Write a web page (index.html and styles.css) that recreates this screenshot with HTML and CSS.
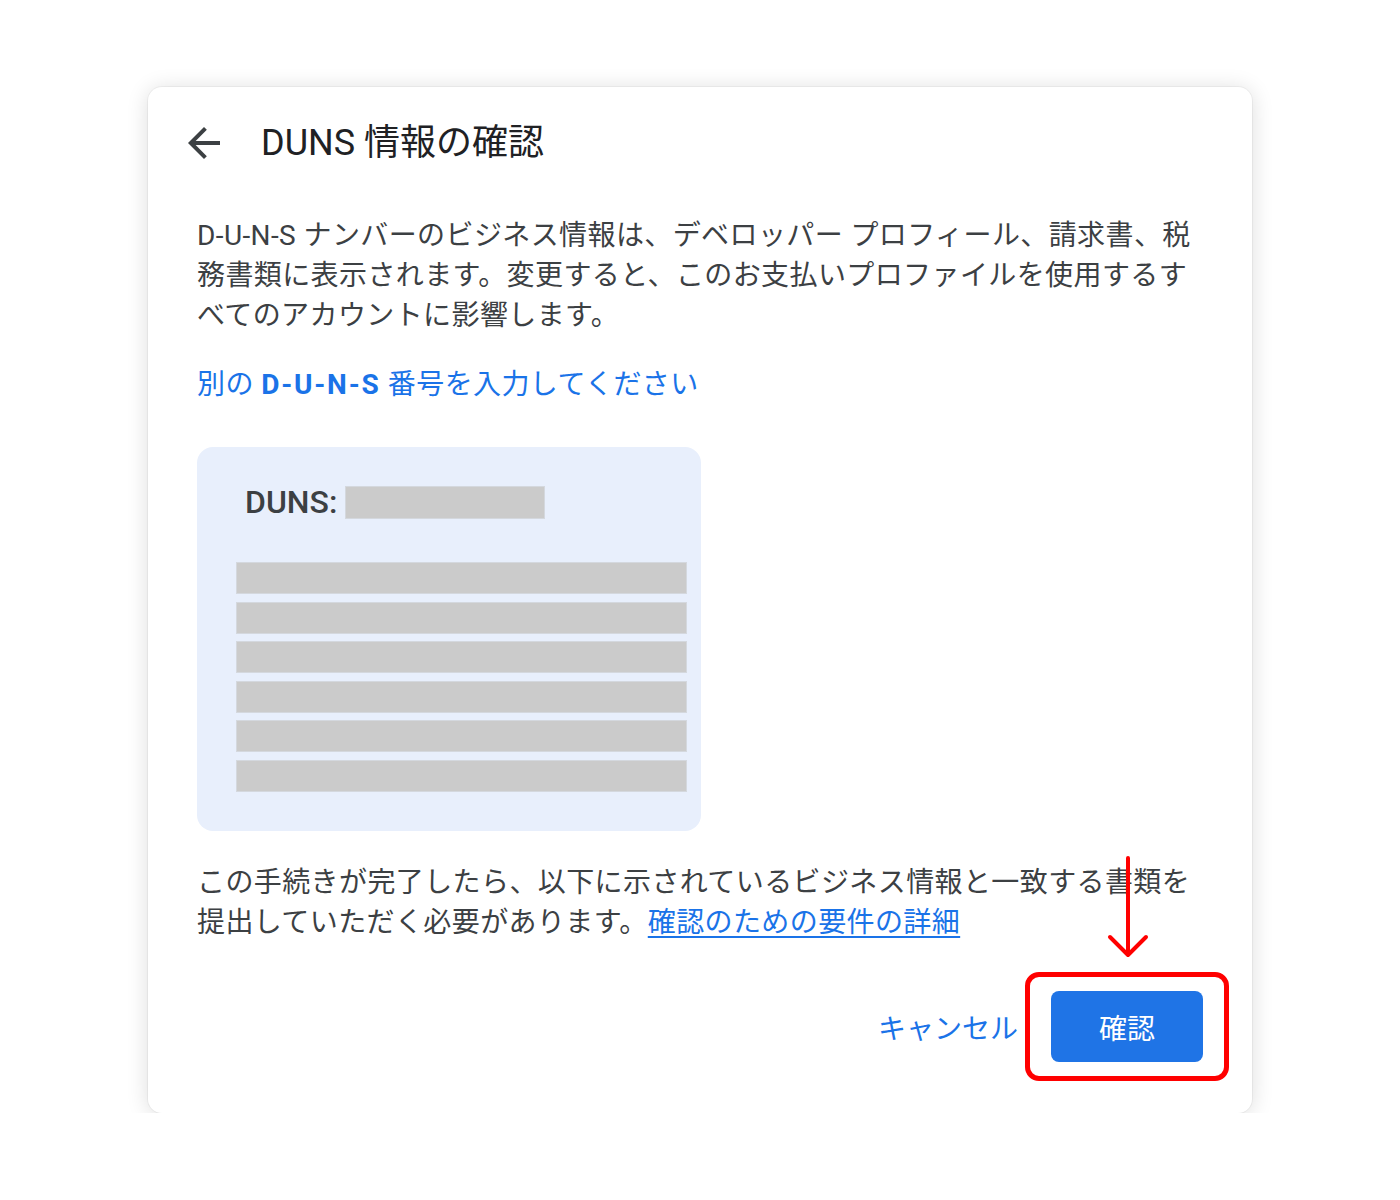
FILE: index.html
```html
<!DOCTYPE html>
<html lang="ja">
<head>
    <meta charset="UTF-8">
    <meta name="viewport" content="width=device-width, initial-scale=1.0">
    <title>DUNS 情報の確認</title>
    <link rel="stylesheet" href="styles.css">
</head>
<body>

<div class="dialog">
    <div class="dialog-header">
        <svg class="back-icon" viewBox="0 0 24 24" width="48" height="48">
            <path d="M20 11H7.83l5.59-5.59L12 4l-8 8 8 8 1.41-1.41L7.83 13H20v-2z" fill="#3c4043"/>
        </svg>
        <h1 class="dialog-title">DUNS 情報の確認</h1>
    </div>

    <p class="intro">D-U-N-S ナンバーのビジネス情報は、デベロッパー プロフィール、請求書、税務書類に表示されます。変更すると、このお支払いプロファイルを使用するすべてのアカウントに影響します。</p>

    <a class="other-link" href="#">別の <b>D-U-N-S</b> 番号を入力してください</a>

    <div class="duns-card">
        <div class="duns-head">
            <span class="duns-label">DUNS:</span>
            <span class="redact redact-num"></span>
        </div>
        <div class="duns-rows">
            <div class="redact redact-row"></div>
            <div class="redact redact-row"></div>
            <div class="redact redact-row"></div>
            <div class="redact redact-row"></div>
            <div class="redact redact-row"></div>
            <div class="redact redact-row"></div>
        </div>
    </div>

    <p class="note">この手続きが完了したら、以下に示されているビジネス情報と一致する書類を提出していただく必要があります。<a href="#">確認のための要件の詳細</a></p>

    <div class="actions">
        <button class="btn-text">キャンセル</button>
        <button class="btn-primary">確認</button>
    </div>

    <!-- annotation -->
    <svg class="mark-arrow" viewBox="0 0 46 104" width="46" height="104">
        <path d="M23 3 V98 M5 82 L23 100 L41 82" fill="none" stroke="#f00" stroke-width="4" stroke-linecap="round" stroke-linejoin="round"/>
    </svg>
    <div class="mark-box"></div>
</div>

</body>
</html>
```

FILE: styles.css
```css
body {
    margin: 0;
    background-color: #fff;
    font-family: Roboto, "Noto Sans CJK JP", sans-serif;
    color: #3c4043;
}

.dialog {
    position: relative;
    box-sizing: border-box;
    width: 1104px;
    margin: 87px 0 0 148px;
    padding: 32px 49px 51px 49px;
    background-color: #fff;
    border-radius: 14px;
    box-shadow: 0 0 0 1px rgba(0, 0, 0, 0.04), 0 2px 22px rgba(0, 0, 0, 0.14);
}

.dialog-header {
    display: flex;
    align-items: center;
    height: 48px;
    margin-left: -17px;
    gap: 33px;
}

.back-icon {
    display: block;
}

.dialog-title {
    margin: 0;
    font-size: 36px;
    font-weight: 400;
    color: #202124;
    line-height: 48px;
}

.intro {
    margin: 49px 0 0 0;
    font-size: 28px;
    line-height: 40px;
    letter-spacing: 0.4px;
}

.other-link {
    display: block;
    margin-top: 29px;
    font-size: 28px;
    line-height: 40px;
    letter-spacing: 0.4px;
    color: #1a73e8;
    text-decoration: none;
}

.other-link b {
    font-weight: 700;
    letter-spacing: 1.8px;
}

.duns-card {
    box-sizing: border-box;
    width: 504px;
    height: 384px;
    margin-top: 42px;
    padding: 39px 14px 0 39px;
    background-color: #e8effc;
    border-radius: 16px;
}

.duns-head {
    display: flex;
    align-items: center;
    gap: 8px;
    margin-left: 9px;
}

.duns-label {
    font-size: 32px;
    font-weight: 500;
    color: #3c4043;
    line-height: 33px;
}

.redact {
    box-sizing: border-box;
    background-color: #cbcbcb;
    border: 1px solid #d4d8de;
}

.redact-num {
    display: block;
    width: 200px;
    height: 33px;
}

.duns-rows {
    display: flex;
    flex-direction: column;
    gap: 7.6px;
    margin-top: 43px;
}

.redact-row {
    height: 32px;
}

.note {
    margin: 32px 0 0 0;
    font-size: 28px;
    line-height: 40px;
    letter-spacing: 0.4px;
}

.note a {
    color: #1a73e8;
    text-decoration: underline;
    text-underline-offset: 4px;
}

.actions {
    display: flex;
    justify-content: flex-end;
    align-items: center;
    gap: 33px;
    margin-top: 48px;
}

button {
    font-family: Roboto, "Noto Sans CJK JP", sans-serif;
    font-size: 28px;
    border: none;
    cursor: pointer;
}

.btn-text {
    padding: 0;
    background: none;
    color: #1a73e8;
}

.btn-primary {
    width: 152px;
    height: 71px;
    border-radius: 8px;
    background-color: #1f74e6;
    color: #fff;
}

.mark-box {
    position: absolute;
    left: 877px;
    top: 885px;
    width: 204px;
    height: 109px;
    box-sizing: border-box;
    border: 5px solid #f00;
    border-radius: 14px;
}

.mark-arrow {
    position: absolute;
    left: 957px;
    top: 768px;
}
```
